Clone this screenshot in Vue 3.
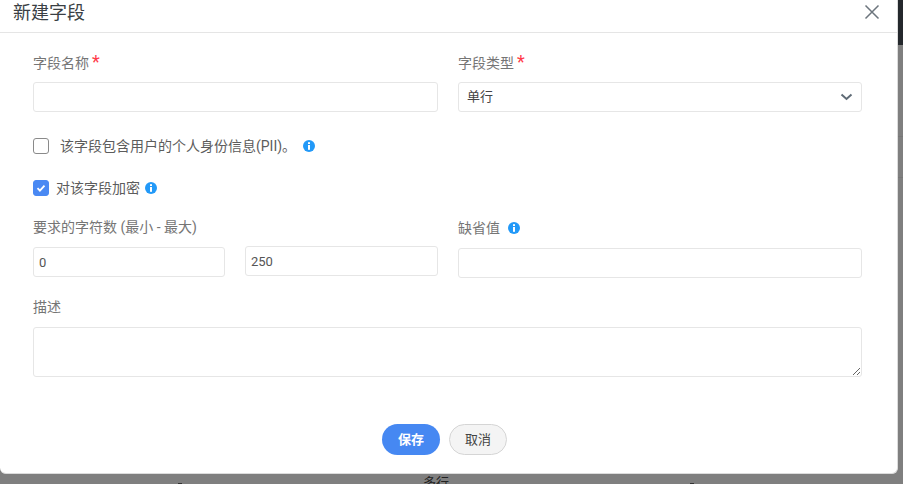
<script setup>
const infoPath = 'M6 0a6 6 0 1 0 0 12A6 6 0 0 0 6 0z'
</script>

<template>
  <div class="page">
    <div class="backdrop">
      <div class="strip-dark"></div>
      <div class="strip-line line-a"></div>
      <div class="strip-line line-b"></div>
      <span class="behind-text">多行</span>
      <span class="behind-mark mark-a"></span>
      <span class="behind-mark mark-b"></span>
    </div>
    <div class="dialog">
      <header class="head">
        <h2 class="title">新建字段</h2>
        <svg class="close" width="16" height="16" viewBox="0 0 16 16"><path d="M1.5 1.5l13 13M14.5 1.5l-13 13" stroke="#6c757d" stroke-width="1.5" fill="none"/></svg>
      </header>
      <div class="body">
        <div class="two">
          <div class="field">
            <label class="lab">字段名称<span class="req">*</span></label>
            <div class="input"></div>
          </div>
          <div class="field">
            <label class="lab">字段类型<span class="req">*</span></label>
            <div class="input select">
              <span>单行</span>
              <svg width="14" height="14" viewBox="0 0 14 14"><path d="M2.5 4.5l5 4.5 5-4.5" stroke="#5f6b76" stroke-width="2" fill="none"/></svg>
            </div>
          </div>
        </div>
        <div class="check-row pii">
          <span class="box"></span>
          <span class="check-text first">该字段包含用户的个人身份信息(PII)。</span>
          <svg class="info gap-pii" width="12" height="12" viewBox="0 0 12 12"><path :d="infoPath" fill="#2299f8"/><rect x="5" y="2.2" width="2" height="1.8" fill="#fff"/><rect x="5" y="5" width="2" height="4.8" fill="#fff"/></svg>
        </div>
        <div class="check-row enc">
          <span class="box on">
            <svg width="10" height="10" viewBox="0 0 10 10"><path d="M1.5 5.2l2.4 2.4 4.6-5" stroke="#fff" stroke-width="1.8" fill="none"/></svg>
          </span>
          <span class="check-text">对该字段加密</span>
          <svg class="info" width="12" height="12" viewBox="0 0 12 12"><path :d="infoPath" fill="#2299f8"/><rect x="5" y="2.2" width="2" height="1.8" fill="#fff"/><rect x="5" y="5" width="2" height="4.8" fill="#fff"/></svg>
        </div>
        <div class="two limits">
          <div class="field">
            <label class="lab lab-tight">要求的字符数 (最小 - 最大)</label>
            <div class="pair">
              <div class="input num low">0</div>
              <div class="input num">250</div>
            </div>
          </div>
          <div class="field">
            <label class="lab lab-tight lab-def">缺省值
              <svg class="info info-def" width="12" height="12" viewBox="0 0 12 12"><path :d="infoPath" fill="#2299f8"/><rect x="5" y="2.2" width="2" height="1.8" fill="#fff"/><rect x="5" y="5" width="2" height="4.8" fill="#fff"/></svg>
            </label>
            <div class="input def"></div>
          </div>
        </div>
        <div class="field desc">
          <label class="lab">描述</label>
          <textarea class="area"></textarea>
        </div>
        <div class="actions">
          <button class="btn save">保存</button>
          <button class="btn cancel">取消</button>
        </div>
      </div>
    </div>
  </div>
</template>

<style>
html, body { margin: 0; padding: 0; overflow: hidden; }
</style>

<style scoped>
.page {
  position: relative;
  width: 903px;
  height: 484px;
  overflow: hidden;
  background: #7f7f7f;
  font-family: Roboto, "Noto Sans CJK SC", sans-serif;
}
.backdrop { position: absolute; inset: 0; }
.strip-dark { position: absolute; right: 0; top: 0; width: 6px; height: 45px; background: #24282c; }
.strip-line { position: absolute; right: 0; width: 6px; height: 1px; background: #777; }
.line-a { top: 136px; }
.line-b { top: 177px; }
.behind-text { position: absolute; left: 423px; top: 475px; font-size: 13px; line-height: 16px; color: #222; }
.behind-mark { position: absolute; top: 483px; width: 4px; height: 1px; background: #333; }
.mark-a { left: 178px; }
.mark-b { left: 690px; }
.dialog {
  position: absolute;
  left: 0;
  top: 0;
  box-sizing: border-box;
  width: 898px;
  height: 474px;
  background: #fff;
  border-right: 1px solid #dcdcdc;
  border-bottom: 1px solid #dcdcdc;
  border-radius: 0 0 6px 6px;
  display: flex;
  flex-direction: column;
}
.head {
  height: 32px;
  flex: none;
  border-bottom: 1px solid #e5e5e5;
  display: flex;
  align-items: center;
  justify-content: space-between;
  padding: 0 17px 0 13px;
}
.title { margin: -6px 0 0; font-size: 18px; font-weight: 400; color: #3a3f44; line-height: 26px; }
.close { margin-top: -8px; }
.body { padding: 0 35px 0 33px; display: flex; flex-direction: column; }
.two { display: grid; grid-template-columns: 405px 404px; column-gap: 20px; padding-top: 19px; }
.field { display: flex; flex-direction: column; }
.lab { font-size: 14px; line-height: 20px; color: #757575; height: 20px; margin-bottom: 10px; }
.lab-tight { margin-bottom: 9px; }
.req { color: #ff3b4a; font-size: 18px; line-height: 20px; margin-left: 3px; }
.input {
  box-sizing: border-box;
  height: 30px;
  border: 1px solid #e6e6e6;
  border-radius: 3px;
  background: #fff;
  font-size: 13px;
  line-height: 28px;
  color: #444;
}
.select { display: flex; align-items: center; justify-content: space-between; padding: 0 8px; }
.check-row { display: flex; align-items: center; font-size: 14px; color: #5c5c5c; height: 20px; }
.pii { margin-top: 24px; }
.enc { margin-top: 22px; }
.box {
  box-sizing: border-box;
  width: 16px;
  height: 16px;
  border: 1px solid #8a8a8a;
  border-radius: 3px;
  display: flex;
  align-items: center;
  justify-content: center;
  flex: none;
}
.box.on { background: #4a89f3; border-color: #4a89f3; }
.check-text { margin-left: 7px; margin-top: -2px; }
.check-text.first { margin-left: 11px; }
.info { margin-left: 5px; flex: none; }
.gap-pii { margin-left: 7px; }
.limits { padding-top: 19px; }
.pair { display: grid; grid-template-columns: 192px 193px; column-gap: 20px; }
.num { padding: 1px 0 0 5px; color: #555; }
.low { margin-top: 1px; }
.lab-def { display: flex; align-items: center; box-sizing: border-box; padding-top: 2px; }
.info-def { margin-left: 8px; }
.def { margin-top: 2px; }
.desc { margin-top: 19px; }
.area {
  box-sizing: border-box;
  width: 829px;
  height: 50px;
  border: 1px solid #e6e6e6;
  border-radius: 3px;
  outline: none;
  display: block;
  resize: vertical;
}
.actions { display: flex; justify-content: center; gap: 9px; margin-top: 47px; padding-right: 6px; }
.btn {
  box-sizing: border-box;
  width: 58px;
  height: 31px;
  border-radius: 16px;
  font-size: 13px;
  font-family: inherit;
  padding: 0 0 2px;
}
.save { background: #4688f2; color: #fff; border: none; font-weight: 700; }
.cancel { background: #f4f4f4; color: #444; border: 1px solid #d5d5d5; }
</style>
